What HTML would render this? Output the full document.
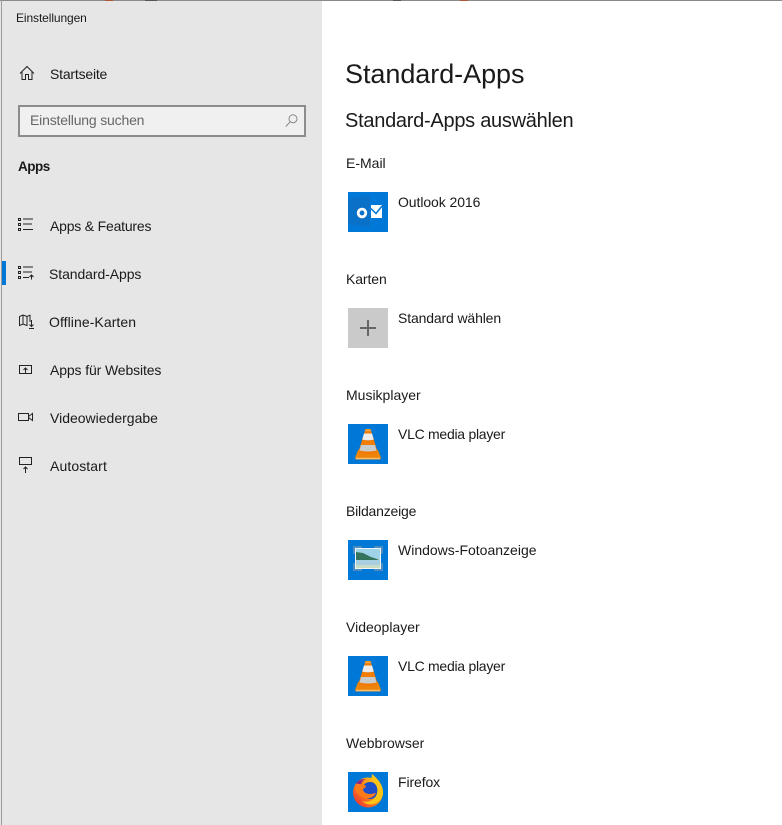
<!DOCTYPE html>
<html lang="de"><head><meta charset="utf-8"><title>Einstellungen</title>
<style>
html,body{margin:0;padding:0;background:#fff}
body{width:782px;height:825px;position:relative;overflow:hidden;font-family:"Liberation Sans",sans-serif;color:#1a1a1a}
.t{position:absolute;white-space:nowrap;line-height:20px;font-size:14px}
.ic{position:absolute}
.sb{position:absolute;left:0;top:1px;width:322px;height:824px;background:#e6e6e6}
.tile{position:absolute;left:348px;width:40px;height:40px;background:#0078d7}
svg{display:block;overflow:visible}
</style></head><body>
<div style="position:absolute;left:0;top:0;width:782px;height:1px;background:#8a8a8a"></div>
<div style="position:absolute;left:105px;top:0;width:8px;height:1px;background:#b0573a"></div>
<div style="position:absolute;left:145px;top:0;width:12px;height:1px;background:#555"></div>
<div style="position:absolute;left:393px;top:0;width:8px;height:1px;background:#555"></div>
<div style="position:absolute;left:460px;top:0;width:8px;height:1px;background:#b0573a"></div>
<div class="sb"></div>
<div style="position:absolute;left:1px;top:0;width:1px;height:825px;background:#9c9c9c"></div>

<div class="t" style="left:16px;top:8px;font-size:12px;letter-spacing:-.1px">Einstellungen</div>

<svg class="ic" style="left:19px;top:65px" width="16" height="16" viewBox="0 0 16 16" fill="none" stroke="#222" stroke-width="1"><path d="M1 8.500 8 1.500l7 7M3 7v7.500h3.500V9.500h3v5H13V7"/></svg>
<div class="t" style="left:50px;top:64px;letter-spacing:-.2px">Startseite</div>

<div style="position:absolute;left:18px;top:105px;width:284px;height:28px;border:2px solid #8c8c8c;background:#f0f0f0"></div>
<div class="t" style="left:30px;top:110px;color:#666;letter-spacing:-.18px">Einstellung suchen</div>
<svg class="ic" style="left:285px;top:114px" width="13" height="13" viewBox="0 0 13 13" fill="none" stroke="#888" stroke-width="1"><circle cx="8" cy="4.800" r="4"/><path d="M5.100 7.800 .8 12.500"/></svg>

<div class="t" style="left:18px;top:157px;font-weight:bold;font-size:13.500px;letter-spacing:-.5px">Apps</div>

<svg class="ic" style="left:18px;top:217px" width="16" height="16" viewBox="0 0 16 16" fill="none" stroke="#222" stroke-width="1"><path d="M.5 1.500h2v2h-2zM.5 6.500h2v2h-2zM.5 11.500h2v2h-2zM5 2h10M5 7h9M5 12.500h10"/></svg>
<div class="t" style="left:50px;top:216px;letter-spacing:-.2px">Apps &amp; Features</div>

<div style="position:absolute;left:2px;top:261px;width:4px;height:24px;background:#0078d7"></div>
<svg class="ic" style="left:18px;top:266px" width="16" height="16" viewBox="0 0 16 16" fill="none" stroke="#222" stroke-width="1"><path d="M.5 .5h2v2h-2zM.5 5.500h2v2h-2zM.5 10.500h2v2h-2zM5 1h10M5 6h9M5 11.500h6M13.500 13.500V9M11.500 11l2-2 2 2"/></svg>
<div class="t" style="left:49px;top:264px;letter-spacing:-.08px">Standard-Apps</div>

<svg class="ic" style="left:18px;top:314px" width="16" height="16" viewBox="0 0 16 16" fill="none" stroke="#222" stroke-width="1"><path d="M1.500 2.500 5 1l4 1.500 3-1.300V8M1.500 2.500v9L5 10l4 1.500V2.500M5 1v9M13.500 6v6M11.500 10.500l2 2 2-2M11 14.500h5"/></svg>
<div class="t" style="left:49px;top:312px;letter-spacing:.07px">Offline-Karten</div>

<svg class="ic" style="left:19px;top:364px" width="14" height="12" viewBox="0 0 14 12" fill="none" stroke="#222" stroke-width="1"><path d="M.5 1.500h12v8H.5zM6.500 9V4M4.500 6l2-2 2 2"/></svg>
<div class="t" style="left:50px;top:360px;letter-spacing:-.12px">Apps für Websites</div>

<svg class="ic" style="left:18px;top:412px" width="16" height="12" viewBox="0 0 16 12" fill="none" stroke="#222" stroke-width="1"><path d="M.5 1.500h10v7H.5zM10.500 4.500l4-3v7l-4-3"/></svg>
<div class="t" style="left:50px;top:408px">Videowiedergabe</div>

<svg class="ic" style="left:19px;top:457px" width="14" height="16" viewBox="0 0 14 16" fill="none" stroke="#222" stroke-width="1"><path d="M.5 .5h12v7H.5zM6.500 16V10M4.500 12l2-2 2 2"/></svg>
<div class="t" style="left:50px;top:456px;letter-spacing:.1px">Autostart</div>

<div class="t" style="left:345px;top:58px;font-size:27px;line-height:32px;letter-spacing:-.05px">Standard-Apps</div>
<div class="t" style="left:345px;top:109px;font-size:20px;line-height:24px;letter-spacing:-.27px">Standard-Apps auswählen</div>

<div class="t" style="left:346px;top:153px">E-Mail</div>
<div class="tile" style="top:192px"><svg width="40" height="40" viewBox="0 0 40 40"><path d="M0 7l22-4v32l-22-3z" fill="#0a71c9"/><ellipse cx="14" cy="21" rx="3.800" ry="3.900" fill="none" stroke="#fff" stroke-width="2.800"/><path d="M23 13h11v13H23z" fill="#fff"/><path d="M23 16.500l5 5 6-7.500" fill="none" stroke="#0078d7" stroke-width="1.500"/></svg></div>
<div class="t" style="left:398px;top:192px;letter-spacing:-.08px">Outlook 2016</div>

<div class="t" style="left:346px;top:269px;letter-spacing:-.1px">Karten</div>
<div class="tile" style="top:308px;background:#cacaca"><svg width="40" height="40" viewBox="0 0 40 40"><path d="M12 20h16M20 12v16" stroke="#666" stroke-width="2"/></svg></div>
<div class="t" style="left:398px;top:308px;letter-spacing:-.14px">Standard wählen</div>

<div class="t" style="left:346px;top:385px">Musikplayer</div>
<div class="tile" style="top:424px"><svg width="40" height="40" viewBox="0 0 40 40"><path d="M10 26h20l3 8-1 1.500H8L7 34z" fill="#ee8409"/><path d="M8 34.500h24" stroke="#f9c069" stroke-width="1.500"/><path d="M17.500 5h5l7.500 24q-10 3-20 0z" fill="#f07c04"/><path d="M16 9.500h8l1.800 6q-5.800 1.500-11.600 0z" fill="#ececec"/><path d="M13 21h14l1.500 5.500q-8.500 2-17 0z" fill="#c9cccf"/><path d="M17.500 5h5l.8 2.500h-6.600z" fill="#f49a30"/></svg></div>
<div class="t" style="left:398px;top:424px;letter-spacing:-.27px">VLC media player</div>

<div class="t" style="left:346px;top:501px;letter-spacing:-.2px">Bildanzeige</div>
<div class="tile" style="top:540px"><svg width="40" height="40" viewBox="0 0 40 40"><path d="M5 6h9v8H5zM26 6h9v8h-9zM5 23h9v8H5zM26 23h9v8h-9z" fill="#4d8cc0"/><path d="M7 8h26v21H7z" fill="#eef3f3"/><path d="M8 9h24v10H8z" fill="#9fd3e8"/><path d="M8 20v-8l7 1 8 4 9 3z" fill="#35745c"/><path d="M8 20h24v8H8z" fill="#a8cfe0"/><path d="M8 25h24v3H8z" fill="#c8dcc6"/></svg></div>
<div class="t" style="left:398px;top:540px">Windows-Fotoanzeige</div>

<div class="t" style="left:346px;top:617px">Videoplayer</div>
<div class="tile" style="top:656px"><svg width="40" height="40" viewBox="0 0 40 40"><path d="M10 26h20l3 8-1 1.500H8L7 34z" fill="#ee8409"/><path d="M8 34.500h24" stroke="#f9c069" stroke-width="1.500"/><path d="M17.500 5h5l7.500 24q-10 3-20 0z" fill="#f07c04"/><path d="M16 9.500h8l1.800 6q-5.800 1.500-11.600 0z" fill="#ececec"/><path d="M13 21h14l1.500 5.500q-8.500 2-17 0z" fill="#c9cccf"/><path d="M17.500 5h5l.8 2.500h-6.600z" fill="#f49a30"/></svg></div>
<div class="t" style="left:398px;top:656px;letter-spacing:-.27px">VLC media player</div>

<div class="t" style="left:346px;top:733px">Webbrowser</div>
<div class="tile" style="top:772px"><svg width="40" height="40" viewBox="0 0 40 40"><defs><linearGradient id="f" x1="1" y1="0" x2="0" y2="1"><stop offset="0" stop-color="#ffd21a"/><stop offset=".5" stop-color="#ff8a16"/><stop offset="1" stop-color="#e8203c"/></linearGradient></defs><circle cx="20" cy="20.500" r="15" fill="url(#f)"/><circle cx="22" cy="18.500" r="8.500" fill="#1d50c8"/><path d="M24 2c-1 4 0 7 3 10 3 3 3 8 1 12-3 5-9 7-14 5 7 7 21 3 21-9 0-7-5-13-11-18z" fill="#ffc415"/><path d="M7 14c3-5 7-7 11-7-2 2-3 3-3 5 2 1 3 2 3 3l-3 2c0 3 3 5 7 5 3 0 5-1 6-1-2 5-10 7-14 4-5-3-8-7-7-11z" fill="#ff7a18"/><path d="M8 11c3-3 6-4 9-4-2 1-3 3-4 5-2 0-4 0-5-1z" fill="#8d2a84"/></svg></div>
<div class="t" style="left:398px;top:772px;letter-spacing:-.1px">Firefox</div>
</body></html>
